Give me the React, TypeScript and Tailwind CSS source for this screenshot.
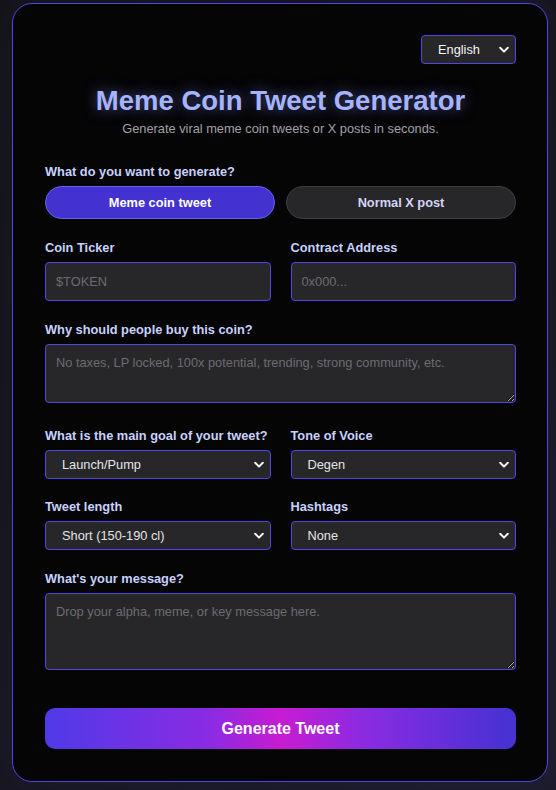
import React from "react";

const Chevron = () => (
  <svg
    className="pointer-events-none absolute right-[7px] top-1/2 -translate-y-1/2"
    width="10"
    height="7"
    viewBox="0 0 10 7"
    fill="none"
  >
    <path d="M1.2 1.3 L5 5.1 L8.8 1.3" stroke="#f4f4f5" strokeWidth="2" strokeLinecap="round" strokeLinejoin="round" />
  </svg>
);

const Select = ({ value }: { value: string }) => (
  <div className="relative">
    <select
      defaultValue={value}
      className="block h-[29px] w-full appearance-none rounded-[4px] border border-[#4f46e5] bg-[#27272a] pl-[16px] pr-6 text-[12.8px] text-[#e4e4e7] outline-none"
    >
      <option>{value}</option>
    </select>
    <Chevron />
  </div>
);

const Label = ({ children }: { children: React.ReactNode }) => (
  <div className="mb-[6px] whitespace-nowrap text-[12.8px] font-bold leading-[16px] text-[#c7d2fe]">{children}</div>
);

export default function App() {
  return (
    <div
      className="min-h-[790px] w-full bg-[linear-gradient(135deg,#141418_0%,#17161f_50%,#1d1c2b_100%)] pb-[8px] pl-[12px] pr-[8px] pt-[3px]"
      style={{ fontFamily: '"Liberation Sans", Arial, sans-serif' }}
    >
      <div className="flex flex-col rounded-[20px] border border-[#4f46e5] bg-[#050506] pb-[32px] pl-[32px] pr-[31px] pt-[31px] shadow-[0_0_30px_rgba(79,70,229,0.08)]">
        <div className="flex justify-end">
          <div className="relative w-[95px]">
            <select
              defaultValue="English"
              className="block h-[29px] w-full appearance-none rounded-[4px] border border-[#4f46e5] bg-[#27272a] pl-[16px] pr-6 text-[12.8px] text-[#f4f4f5] outline-none"
            >
              <option>English</option>
            </select>
            <Chevron />
          </div>
        </div>

        <h1 className="mt-[21px] text-center text-[27.5px] font-bold leading-[32px] text-[#a5b4fc] [text-shadow:0_0_14px_rgba(129,140,248,0.55)]">
          Meme Coin Tweet Generator
        </h1>
        <p className="mt-[4px] text-center text-[12.8px] leading-[16px] text-[#a1a1aa]">
          Generate viral meme coin tweets or X posts in seconds.
        </p>

        <div className="mt-[27px]">
          <Label>What do you want to generate?</Label>
          <div className="grid grid-cols-2 gap-[11px]">
            <button className="h-[33px] rounded-full border border-[#6366f1] bg-[#4332cf] text-[12.8px] font-bold text-white">
              Meme coin tweet
            </button>
            <button className="h-[33px] rounded-full border border-[#3f3f46] bg-[#27272a] text-[12.8px] font-bold text-[#d4d4f5]">
              Normal X post
            </button>
          </div>
        </div>

        <div className="mt-[21px] grid grid-cols-2 gap-5">
          <div>
            <Label>Coin Ticker</Label>
            <input
              placeholder="$TOKEN"
              className="block h-[39px] w-full rounded-[4px] border border-[#4f46e5] bg-[#27272a] px-[10px] text-[12.8px] text-white outline-none placeholder:text-[#6b6b73]"
            />
          </div>
          <div>
            <Label>Contract Address</Label>
            <input
              placeholder="0x000..."
              className="block h-[39px] w-full rounded-[4px] border border-[#4f46e5] bg-[#27272a] px-[10px] text-[12.8px] text-white outline-none placeholder:text-[#6b6b73]"
            />
          </div>
        </div>

        <div className="mt-[21px]">
          <Label>Why should people buy this coin?</Label>
          <textarea
            placeholder="No taxes, LP locked, 100x potential, trending, strong community, etc."
            className="block h-[59px] w-full rounded-[4px] border border-[#4f46e5] bg-[#27272a] px-[10px] py-[10px] text-[12.8px] leading-[16px] text-white outline-none placeholder:text-[#6b6b73]"
          />
        </div>

        <div className="mt-[25px] grid grid-cols-2 gap-5">
          <div>
            <Label>What is the main goal of your tweet?</Label>
            <Select value="Launch/Pump" />
          </div>
          <div>
            <Label>Tone of Voice</Label>
            <Select value="Degen" />
          </div>
        </div>

        <div className="mt-[20px] grid grid-cols-2 gap-5">
          <div>
            <Label>Tweet length</Label>
            <Select value="Short (150-190 cl)" />
          </div>
          <div>
            <Label>Hashtags</Label>
            <Select value="None" />
          </div>
        </div>

        <div className="mt-[21px]">
          <Label>What's your message?</Label>
          <textarea
            placeholder="Drop your alpha, meme, or key message here."
            className="block h-[77px] w-full rounded-[4px] border border-[#4f46e5] bg-[#27272a] px-[10px] py-[10px] text-[12.8px] leading-[16px] text-white outline-none placeholder:text-[#6b6b73]"
          />
        </div>

        <button className="mt-[38px] h-[41px] w-full rounded-[10px] bg-[linear-gradient(90deg,#4f3ae8_0%,#8a2be2_35%,#c81bd1_50%,#8a2be2_68%,#4532d0_100%)] text-[16px] font-bold text-white">
          Generate Tweet
        </button>
      </div>
    </div>
  );
}
